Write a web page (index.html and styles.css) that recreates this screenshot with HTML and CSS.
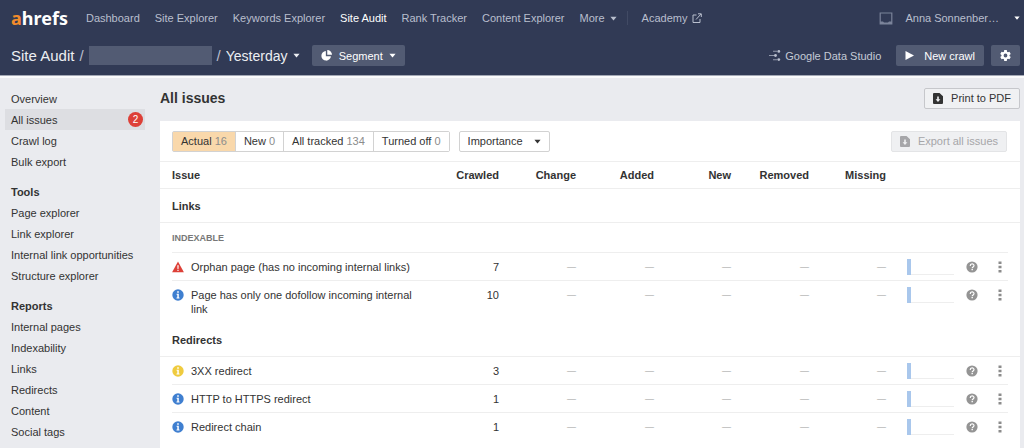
FILE: index.html
```html
<!DOCTYPE html>
<html lang="en">
<head>
<meta charset="utf-8">
<meta name="viewport" content="width=device-width, initial-scale=1">
<title>Site Audit – All issues</title>
<link rel="stylesheet" href="styles.css">
</head>
<body>
<svg class="defs" aria-hidden="true">
  <symbol id="caret" viewBox="0 0 8 5"><path d="M0.5 0.5h7L4 4.7z" fill="currentColor"/></symbol>
  <symbol id="file" viewBox="0 0 10 11"><path fill="currentColor" fill-rule="evenodd" d="M1 0h5.5L10 3.2V10a1 1 0 0 1-1 1H1a1 1 0 0 1-1-1V1a1 1 0 0 1 1-1zM4.2 3.5v2.7H2.6L5 8.9l2.4-2.7H5.8V3.5z"/></symbol>
  <symbol id="info" viewBox="0 0 12 12"><circle cx="6" cy="6" r="5.7" fill="currentColor"/><path fill="#fff" d="M5.2 2.3h1.6v1.5H5.2zM4.6 4.8h2.2v3.6h.7v1H4.5v-1h.8V5.800h-.7z"/></symbol>
  <symbol id="warn" viewBox="0 0 12 12"><path fill="#dd4038" d="M6 .4 11.900 11.300H.1z"/><path fill="#fff" d="M5.300 4.200h1.400L6.500 8h-1zM5.400 8.800h1.200v1.300H5.400z"/></symbol>
  <symbol id="help" viewBox="0 0 12 12"><circle cx="6" cy="6" r="5.600" fill="#949494"/><path d="M4.200 4.900c0-2.600 3.800-2.500 3.800-.3 0 1.300-1.800 1.300-1.800 2.600" fill="none" stroke="#fff" stroke-width="1.200"/><path fill="#fff" d="M5.500 8h1.400v1.300H5.500z"/></symbol>
  <symbol id="dots" viewBox="0 0 4 12"><path fill="#8c8c8c" d="M.5.500h3v2.600h-3zM.5 4.700h3v2.600h-3zM.5 8.900h3v2.600h-3z"/></symbol>
  <symbol id="spark" viewBox="0 0 47 17"><path fill="#eeeeee" d="M4 15h43v1H4z"/><path fill="#a9c7ec" d="M0 0h4v16H0z"/></symbol>
</svg>

<header class="header">
  <div class="bar">
    <a class="logo" href="#"><span class="logo-a">a</span>hrefs</a>
    <nav class="nav" aria-label="Main">
      <a href="#">Dashboard</a>
      <a href="#">Site Explorer</a>
      <a href="#">Keywords Explorer</a>
      <a class="current" href="#">Site Audit</a>
      <a href="#">Rank Tracker</a>
      <a href="#">Content Explorer</a>
      <button class="plain" type="button">More <svg class="caret"><use href="#caret"/></svg></button>
      <span class="divider"></span>
      <a href="#">Academy <svg class="ext" viewBox="0 0 10 10" fill="none" stroke="currentColor"><path d="M4.500 2H1v7.500h7V6M4 6.500 9 1M6 .8h3.300V4"/></svg></a>
    </nav>
    <div class="account">
      <a href="#" aria-label="Display"><svg class="screen" viewBox="0 0 14 13" fill="none"><path d="M1.200 1h11.600v11H1.200z" stroke="#7b839a" stroke-width="1.200"/><path d="M1 9.500h3l1 1h4l1-1h3V12H1z" fill="#7b839a"/></svg></a>
      <button class="plain user" type="button">Anna Sonnenber… <svg class="caret caret-end"><use href="#caret"/></svg></button>
    </div>
  </div>
  <div class="bar bar-project">
    <div class="crumbs">
      <a class="crumb" href="#">Site Audit</a>
      <span class="slash">/</span>
      <span class="project"></span>
      <span class="slash">/</span>
      <span class="picker picker-date"><select aria-label="Crawl date"><option>Yesterday</option></select><svg class="caret"><use href="#caret"/></svg></span>
    </div>
    <button class="btn btn-dark btn-segment" type="button"><svg class="pie" viewBox="0 0 12 12" fill="#fff"><path d="M5.300 1.200V6.700H10.800A5.200 5.200 0 1 1 5.300 1.200z"/><path d="M6.800 0A5.200 5.200 0 0 1 12 5.200H6.800z"/></svg>Segment<svg class="caret"><use href="#caret"/></svg></button>
    <div class="actions">
      <a class="studio" href="#"><svg class="flow" viewBox="0 0 12 11" fill="#b9bfce"><path d="M4 0.800h4v1H4zM0 5h6v1H0zM4 9.200h4v1H4z" opacity=".7"/><circle cx="9.800" cy="1.400" r="1.400"/><circle cx="6.500" cy="5.500" r="1.400"/><circle cx="9.800" cy="9.600" r="1.400"/></svg>Google Data Studio</a>
      <button class="btn btn-dark btn-crawl" type="button"><svg class="play" viewBox="0 0 9 9"><path d="M.5 0 9 4.500.5 9z" fill="#fff"/></svg>New crawl</button>
      <button class="btn btn-dark btn-gear" type="button" aria-label="Settings"><svg class="gear" viewBox="0 0 24 24"><path fill="#fff" d="M19.400 13a7.500 7.500 0 0 0 0-2l2.300-1.800-2.400-4.200-2.800 1.100a8 8 0 0 0-1.700-1L14.400 2H9.600l-.4 3.100a8 8 0 0 0-1.700 1L4.700 5 2.300 9.200 4.600 11a7.500 7.500 0 0 0 0 2l-2.300 1.800L4.700 19l2.800-1.100a8 8 0 0 0 1.700 1l.4 3.100h4.800l.4-3.100a8 8 0 0 0 1.700-1l2.800 1.100 2.400-4.200zM12 15.500a3.500 3.500 0 1 1 0-7 3.500 3.500 0 0 1 0 7z"/></svg></button>
    </div>
  </div>
</header>

<div class="layout">
  <nav class="sidebar" aria-label="Site Audit">
    <ul>
      <li><a href="#">Overview</a></li>
      <li><a class="selected" href="#">All issues <span class="badge">2</span></a></li>
      <li><a href="#">Crawl log</a></li>
      <li><a href="#">Bulk export</a></li>
    </ul>
    <h2>Tools</h2>
    <ul>
      <li><a href="#">Page explorer</a></li>
      <li><a href="#">Link explorer</a></li>
      <li><a href="#">Internal link opportunities</a></li>
      <li><a href="#">Structure explorer</a></li>
    </ul>
    <h2>Reports</h2>
    <ul>
      <li><a href="#">Internal pages</a></li>
      <li><a href="#">Indexability</a></li>
      <li><a href="#">Links</a></li>
      <li><a href="#">Redirects</a></li>
      <li><a href="#">Content</a></li>
      <li><a href="#">Social tags</a></li>
    </ul>
  </nav>

  <main class="main">
    <div class="title-row">
      <h1>All issues</h1>
      <button class="btn btn-print" type="button"><svg class="file"><use href="#file"/></svg>Print to PDF</button>
    </div>
    <section class="panel">
      <div class="toolbar">
        <div class="tabs">
          <button class="active" type="button">Actual <span>16</span></button>
          <button type="button">New <span>0</span></button>
          <button type="button">All tracked <span>134</span></button>
          <button type="button">Turned off <span>0</span></button>
        </div>
        <span class="picker picker-box"><select aria-label="Importance"><option>Importance</option></select><svg class="caret"><use href="#caret"/></svg></span>
        <button class="btn btn-export" type="button" disabled><svg class="file"><use href="#file"/></svg>Export all issues</button>
      </div>
      <table class="issues">
        <colgroup><col><col class="c-crawled"><col class="c-num"><col class="c-wide"><col class="c-num"><col class="c-wide"><col class="c-num"><col class="c-spark"><col class="c-help"><col class="c-menu"></colgroup>
        <thead>
          <tr><th>Issue</th><th>Crawled</th><th>Change</th><th>Added</th><th>New</th><th>Removed</th><th>Missing</th><td></td><td></td><td></td></tr>
        </thead>
        <tbody>
          <tr class="group"><th colspan="10">Links</th></tr>
          <tr class="subgroup inset"><th colspan="10">INDEXABLE</th></tr>
          <tr class="inset"><td><div class="issue"><svg><use href="#warn"/></svg><a href="#">Orphan page (has no incoming internal links)</a></div></td><td>7</td><td>—</td><td>—</td><td>—</td><td>—</td><td>—</td><td><svg class="spark"><use href="#spark"/></svg></td><td><button class="plain icon" type="button" aria-label="Help"><svg class="help"><use href="#help"/></svg></button></td><td><button class="plain icon" type="button" aria-label="Menu"><svg class="dots"><use href="#dots"/></svg></button></td></tr>
          <tr><td><div class="issue blue"><svg><use href="#info"/></svg><a href="#">Page has only one dofollow incoming internal link</a></div></td><td>10</td><td>—</td><td>—</td><td>—</td><td>—</td><td>—</td><td><svg class="spark"><use href="#spark"/></svg></td><td><button class="plain icon" type="button" aria-label="Help"><svg class="help"><use href="#help"/></svg></button></td><td><button class="plain icon" type="button" aria-label="Menu"><svg class="dots"><use href="#dots"/></svg></button></td></tr>
          <tr class="group"><th colspan="10">Redirects</th></tr>
          <tr class="inset"><td><div class="issue yellow"><svg><use href="#info"/></svg><a href="#">3XX redirect</a></div></td><td>3</td><td>—</td><td>—</td><td>—</td><td>—</td><td>—</td><td><svg class="spark"><use href="#spark"/></svg></td><td><button class="plain icon" type="button" aria-label="Help"><svg class="help"><use href="#help"/></svg></button></td><td><button class="plain icon" type="button" aria-label="Menu"><svg class="dots"><use href="#dots"/></svg></button></td></tr>
          <tr class="inset"><td><div class="issue blue"><svg><use href="#info"/></svg><a href="#">HTTP to HTTPS redirect</a></div></td><td>1</td><td>—</td><td>—</td><td>—</td><td>—</td><td>—</td><td><svg class="spark"><use href="#spark"/></svg></td><td><button class="plain icon" type="button" aria-label="Help"><svg class="help"><use href="#help"/></svg></button></td><td><button class="plain icon" type="button" aria-label="Menu"><svg class="dots"><use href="#dots"/></svg></button></td></tr>
          <tr><td><div class="issue blue"><svg><use href="#info"/></svg><a href="#">Redirect chain</a></div></td><td>1</td><td>—</td><td>—</td><td>—</td><td>—</td><td>—</td><td><svg class="spark"><use href="#spark"/></svg></td><td><button class="plain icon" type="button" aria-label="Help"><svg class="help"><use href="#help"/></svg></button></td><td><button class="plain icon" type="button" aria-label="Menu"><svg class="dots"><use href="#dots"/></svg></button></td></tr>
        </tbody>
      </table>
    </section>
  </main>
</div>
</body>
</html>
```

FILE: styles.css
```css
* { box-sizing: border-box; }

body {
  margin: 0;
  min-height: 100vh;
  display: flex;
  flex-direction: column;
  background: #eaebef;
  color: #333;
  font: 11px/14px "Liberation Sans", Arial, sans-serif;
}

a { color: inherit; text-decoration: none; }
svg { display: block; flex: none; }
.defs { position: absolute; width: 0; height: 0; }
button, select { font: inherit; color: inherit; margin: 0; cursor: pointer; }
ul { list-style: none; margin: 0; padding: 0; }
h1, h2 { margin: 0; }

.plain { border: 0; padding: 0; background: none; display: flex; align-items: center; gap: 5px; }
.caret { width: 7px; height: 5px; }

/* Header */
.header { background: #313a55; color: #b9bfce; border-bottom: 1px solid #a3a8b5; }
.bar { display: flex; align-items: center; height: 36px; padding: 0 4px 0 11px; }
.bar-project { height: 39px; color: #fff; }
.logo { font: 700 18px/24px "Noto Sans", sans-serif; color: #fff; }
.logo-a { color: #f18b2c; }
.nav { display: flex; align-items: center; gap: 15px; margin-left: 18px; white-space: nowrap; }
.nav a { display: flex; align-items: center; gap: 5px; }
.nav .current { color: #fff; }
.divider { width: 1px; height: 14px; background: #414a64; margin: 0 -1px 0 -5px; }
.ext { width: 10px; height: 10px; }
.account { display: flex; align-items: center; gap: 12px; margin-left: auto; white-space: nowrap; }
.screen { width: 14px; height: 13px; }
.user { gap: 15px; }
.caret-end { width: 6px; height: 4px; color: #fff; }

.crumbs { display: flex; align-items: center; gap: 5px; font-size: 14px; line-height: 20px; color: #eceef2; }
.crumb { font-size: 15px; }
.slash { color: #b9bfce; font-size: 15px; }
.project { width: 123px; height: 19px; background: #525b73; }
.picker { position: relative; display: inline-flex; align-items: center; }
.picker select { appearance: none; border: 0; background: none; padding: 0; outline-offset: 2px; }
.picker .caret { pointer-events: none; margin-left: 5px; }
.picker option { color: #333; }

.btn {
  display: inline-flex;
  align-items: center;
  height: 21px;
  border: 1px solid transparent;
  border-radius: 2px;
  padding: 0 8px;
  white-space: nowrap;
}
.btn-dark { background: #525b73; color: #fff; }
.btn-segment { margin-left: 12px; gap: 6px; }
.pie { width: 11px; height: 11px; margin-right: 1px; }
.actions { display: flex; align-items: center; gap: 7px; margin-left: auto; }
.studio { display: flex; align-items: center; gap: 4px; margin-right: 8px; color: #c5cad6; }
.flow { width: 12px; height: 11px; }
.btn-crawl { gap: 10px; }
.play { width: 9px; height: 9px; }
.btn-gear { width: 29px; justify-content: center; }
.gear { width: 13px; height: 13px; }

/* Layout */
.layout { flex: 1; display: grid; grid-template-columns: 160px minmax(0, 1fr); border-top: 2px solid #fafafb; }
.sidebar { padding: 10px 15px 0 5px; }
.sidebar a, .sidebar h2 { display: flex; align-items: center; height: 21px; padding: 0 2px 0 6px; font-size: 11px; white-space: nowrap; }
.sidebar h2 { font-weight: 700; margin-top: 9px; }
.sidebar .selected { background: #dddee2; }
.badge { margin-left: auto; width: 15px; height: 15px; border-radius: 50%; background: #dd4038; color: #fff; font-size: 10px; line-height: 15px; text-align: center; }

.main { display: flex; flex-direction: column; padding-right: 4px; }
.title-row { display: flex; align-items: center; justify-content: space-between; height: 43px; padding-bottom: 3px; }
.title-row h1 { font-size: 14px; line-height: 18px; }
.btn-print { border-color: #c6c7cb; background: #f0f1f3; gap: 8px; }
.file { width: 10px; height: 11px; }

.panel { flex: 1; background: #fff; }
.toolbar { display: flex; align-items: center; gap: 9px; height: 41px; padding: 0 13px 0 12px; border-bottom: 1px solid #eee; white-space: nowrap; }
.tabs { display: flex; height: 21px; border: 1px solid #d2d2d2; border-radius: 2px; }
.tabs button { border: 0; border-left: 1px solid #d2d2d2; background: #fff; padding: 0 8px; }
.tabs button:first-child { border-left: 0; }
.tabs .active { background: #f9d8ab; }
.tabs span { color: #8c8c8c; }
.picker-box { height: 21px; border: 1px solid #d2d2d2; border-radius: 2px; padding: 0 8px; }
.picker-box .caret { margin-left: 10px; }
.btn-export { margin-left: auto; gap: 8px; background: #eff0f2; border-color: #e3e4e6; color: #a6a6a9; }

/* Issues table */
.issues { width: 100%; table-layout: fixed; border-collapse: collapse; }
.c-crawled { width: 67px; }
.c-num { width: 77px; }
.c-wide { width: 78px; }
.c-spark { width: 74px; }
.c-help { width: 26px; }
.c-menu { width: 34px; }
.issues th, .issues td { padding: 7px 0; text-align: right; vertical-align: top; }
.issues th:first-child, .issues td:first-child { text-align: left; padding-left: 12px; }
.issues thead th { padding: 6px 0; }
.issues thead td { padding: 0; }
.issues thead tr, .group { border-bottom: 1px solid #eee; }
.issues .group th { padding-top: 10px; padding-bottom: 9px; }
.issues .subgroup th { color: #777; font-size: 9px; padding-top: 8px; padding-bottom: 8px; }
.inset { background: linear-gradient(#eee, #eee) 12px 100% / calc(100% - 24px) 1px no-repeat; }
.issues tbody td:nth-child(n+3) { color: #999; font-size: 9px; }
.issue { display: flex; gap: 7px; padding-right: 8px; }
.issue svg { width: 12px; height: 12px; margin-top: 1px; }
.blue svg { color: #3f7fd0; }
.yellow svg { color: #efcb3f; }
.issues .spark { width: 47px; height: 17px; margin: -1px 0 -2px 21px; }
.icon { width: 100%; height: 14px; }
.help { width: 12px; height: 12px; margin-left: 6px; }
.dots { width: 4px; height: 12px; margin-left: 12px; }
```
